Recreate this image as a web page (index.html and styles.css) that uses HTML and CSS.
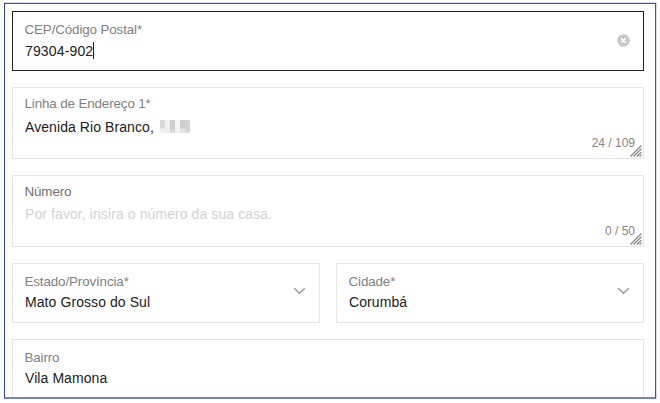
FILE: index.html
```html
<!DOCTYPE html>
<html lang="pt-BR">
<head>
<meta charset="utf-8">
<title>Endereço</title>
<link rel="stylesheet" href="styles.css">
</head>
<body>
<form class="frame">
  <div class="field active">
    <div class="content">
      <span class="label">CEP/Código Postal*</span>
      <span class="value"><span class="digits">79304-902</span><i class="caret"></i></span>
    </div>
    <svg class="clear" viewBox="0 0 13 13"><circle cx="6.5" cy="6.5" r="6.3"/><path d="M4.3 4.3l4.4 4.4M8.7 4.3L4.3 8.7"/></svg>
  </div>
  <div class="field area">
    <div class="content">
      <span class="label">Linha de Endereço 1*</span>
      <span class="value">Avenida Rio Branco,<span class="redacted"><i class="a"></i><i class="b"></i><i class="c"></i><i class="d"></i><i class="e"></i><i class="f"></i></span></span>
    </div>
    <span class="count">24 / 109</span>
    <svg class="grip" viewBox="0 0 12 12"><path d="M.5 11.5L11.5 .5M3.7 11.5L11.5 3.7M6.8 11.5L11.5 6.8M9.6 11.5L11.5 9.6"/></svg>
  </div>
  <div class="field area numero">
    <div class="content">
      <span class="label">Número</span>
      <span class="value placeholder">Por favor, insira o número da sua casa.</span>
    </div>
    <span class="count">0 / 50</span>
    <svg class="grip" viewBox="0 0 12 12"><path d="M.5 11.5L11.5 .5M3.7 11.5L11.5 3.7M6.8 11.5L11.5 6.8M9.6 11.5L11.5 9.6"/></svg>
  </div>
  <div class="row">
    <div class="field select">
      <div class="content">
        <span class="label">Estado/Província*</span>
        <span class="value">Mato Grosso do Sul</span>
      </div>
      <svg class="chevron" viewBox="0 0 13 8"><path d="M1.2 1.2l5.3 5 5.3-5"/></svg>
    </div>
    <div class="field select">
      <div class="content">
        <span class="label">Cidade*</span>
        <span class="value">Corumbá</span>
      </div>
      <svg class="chevron" viewBox="0 0 13 8"><path d="M1.2 1.2l5.3 5 5.3-5"/></svg>
    </div>
  </div>
  <div class="field bairro">
    <div class="content">
      <span class="label">Bairro</span>
      <span class="value">Vila Mamona</span>
    </div>
  </div>
</form>
</body>
</html>
```
FILE: styles.css
```css
* { box-sizing: border-box; }
body {
  margin: 0;
  height: 403px;
  padding: 3px 4px;
  overflow: hidden;
  background: #fff;
  font-family: "Liberation Sans", Arial, sans-serif;
  font-size: 14px;
}
.frame {
  width: 652px;
  height: 396px;
  padding: 7px 11px 0 7px;
  overflow: hidden;
  border: 1px solid #3f51a8;
  border-left-color: #2c44b0;
  border-bottom: 2px solid #7584c4;
  box-shadow: 0 -1px 0 #d5daf2, 1px 0 0 #d5daf2;
  display: flex;
  flex-direction: column;
  gap: 16px;
}
.field {
  flex: none;
  display: flex;
  justify-content: space-between;
  height: 60px;
  padding: 9px 13px 0 12px;
  border: 1px solid #e5e5e5;
  background: #fff;
}
.active { border-color: #222; }
.content { display: flex; flex-direction: column; }
.label, .value {
  display: flex;
  height: 20px;
  line-height: 18px;
  white-space: nowrap;
}
.label { color: #818181; height: 21px; font-size: 13.4px; letter-spacing: -0.13px; margin-left: -0.5px; }
.value { color: #222; letter-spacing: 0.08px; }
.digits { letter-spacing: 0.15px; }
.clear { width: 13px; height: 13px; margin-top: 13px; }
.clear circle { fill: #c8c8c8; }
.clear path { stroke: #fff; stroke-width: 1.6; fill: none; }
.caret { width: 1px; height: 17px; margin-top: 0; background: #222; }
.area { height: 72px; padding: 7px 0 0 12px; }
.area .label { height: 23px; }
.numero .label { height: 22px; color: #707070; }
.numero .placeholder { color: #d2d2d2; letter-spacing: 0.09px; }
.count {
  align-self: flex-end;
  margin: 0 -5px 7px auto;
  font-size: 12px;
  line-height: 16px;
  color: #858585;
}
.grip { width: 12px; height: 12px; margin: 0 1px 1px 0; align-self: flex-end; }
.grip path { stroke: #858585; stroke-width: 1.2; fill: none; }
.row { display: flex; gap: 16px; }
.select { flex: 1; padding-top: 9px; }
.select .label, .bairro .label { height: 20px; }
.chevron { width: 13px; height: 8px; margin-top: 14px; }
.chevron path { fill: none; stroke: #999; stroke-width: 1.4; }
.bairro { height: 80px; }
.redacted {
  display: flex;
  width: 31px;
  height: 14px;
  margin: 2px 0 0 6px;
  filter: blur(0.7px);
}
.redacted i { height: 13px; width: 5px; }
.redacted .a { background: linear-gradient(#d8d8d8 55%, #f2f2f2 75%); }
.redacted .b { background: linear-gradient(#f0f0f0 60%, #eee); }
.redacted .c { background: linear-gradient(#d0d0d0 60%, #dedede); }
.redacted .d { background: linear-gradient(#f4f4f4 60%, #eee); }
.redacted .e { background: linear-gradient(#cdcdcd 55%, #e6e6e6 75%); }
.redacted .f { background: linear-gradient(#d4d4d4 60%, #dedede); }
```
